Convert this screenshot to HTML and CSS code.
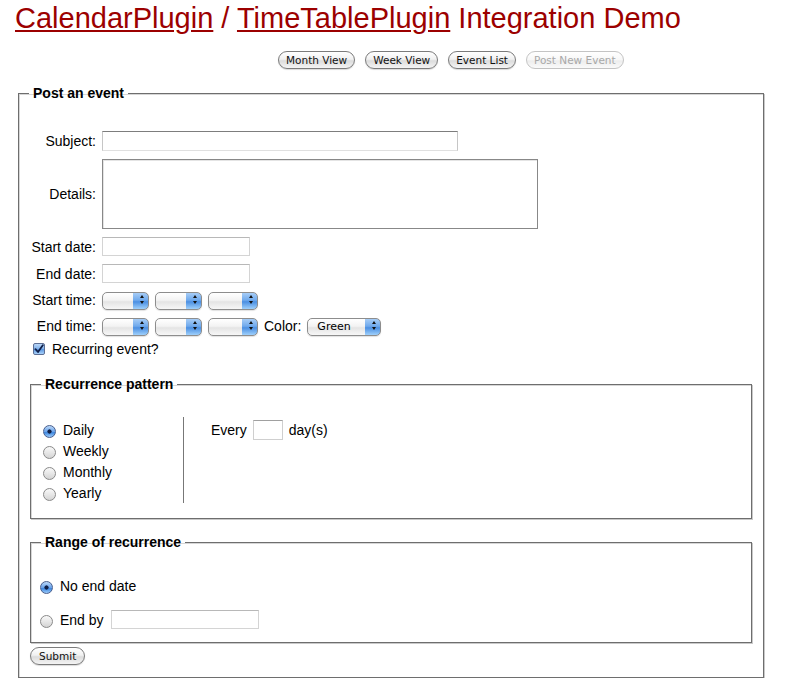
FILE: index.html
```html
<!DOCTYPE html>
<html>
<head>
<meta charset="utf-8">
<title>CalendarPlugin / TimeTablePlugin Integration Demo</title>
<link rel="stylesheet" href="styles.css">
</head>
<body>
<h1 class="title"><a href="#">CalendarPlugin</a> / <a href="#">TimeTablePlugin</a> Integration Demo</h1>
<div class="nav">
  <button class="btn">Month View</button>
  <button class="btn">Week View</button>
  <button class="btn">Event List</button>
  <button class="btn" disabled>Post New Event</button>
</div>
<form class="post">
<fieldset class="outer">
  <legend>Post an event</legend>
  <div class="grid">
    <label class="lbl">Subject:</label>
    <div class="fld"><input class="txt subject" type="text"></div>
    <label class="lbl">Details:</label>
    <div class="fld"><textarea class="details"></textarea></div>
    <label class="lbl">Start date:</label>
    <div class="fld"><input class="txt date" type="text"></div>
    <label class="lbl">End date:</label>
    <div class="fld"><input class="txt date" type="text"></div>
    <label class="lbl">Start time:</label>
    <div class="fld selrow">
      <span class="sel"><select class="s1"></select></span>
      <span class="sel"><select class="s1"></select></span>
      <span class="sel"><select class="s2"></select></span>
    </div>
    <label class="lbl">End time:</label>
    <div class="fld selrow">
      <span class="sel"><select class="s1"></select></span>
      <span class="sel"><select class="s1"></select></span>
      <span class="sel"><select class="s2"></select></span>
      <span class="color-lbl">Color:</span>
      <span class="sel"><select class="s3"><option>Green</option></select></span>
    </div>
  </div>
  <div class="recur">
    <span class="check"><svg width="10" height="10" viewBox="0 0 10 10"><path d="M1.5 5.2 L4 8 L8.8 1.2" fill="none" stroke="#10204a" stroke-width="1.8" stroke-linecap="round" stroke-linejoin="round"/></svg></span>
    <span>Recurring event?</span>
  </div>
  <fieldset class="inner pattern">
    <legend>Recurrence pattern</legend>
    <div class="cols">
      <div class="types">
        <div class="opt"><span class="radio on"></span>Daily</div>
        <div class="opt"><span class="radio"></span>Weekly</div>
        <div class="opt"><span class="radio"></span>Monthly</div>
        <div class="opt"><span class="radio"></span>Yearly</div>
      </div>
      <div class="every">
        <span>Every</span>
        <input class="txt num" type="text">
        <span>day(s)</span>
      </div>
    </div>
  </fieldset>
  <fieldset class="inner range">
    <legend>Range of recurrence</legend>
    <div class="ropt first"><span class="radio on"></span>No end date</div>
    <div class="ropt"><span class="radio"></span>End by <input class="txt endby" type="text"></div>
  </fieldset>
  <button class="btn submit" type="button">Submit</button>
</fieldset>
</form>
</body>
</html>
```
FILE: styles.css
```css
html, body {
  margin: 0;
  padding: 0;
  background: #fff;
}
body {
  font-family: "Liberation Sans", Arial, Helvetica, sans-serif;
  font-size: 14px;
  line-height: 16px;
  color: #000;
}
.title {
  margin: 2px 0 0 15px;
  font-size: 29px;
  line-height: 32px;
  font-weight: normal;
  color: #9c0000;
  white-space: nowrap;
}
.title a {
  color: #9c0000;
  text-decoration: underline;
}
.nav {
  display: flex;
  gap: 10px;
  margin: 17px 0 0 278px;
}
.btn {
  font-family: "DejaVu Sans", "Lucida Grande", sans-serif;
  font-size: 10.5px;
  line-height: 14px;
  height: 18px;
  padding: 0 7px;
  border: 1px solid #7b7b7b;
  border-radius: 9px;
  color: #111;
  background: linear-gradient(to bottom, #ffffff 0%, #f1f1f1 45%, #dcdcdc 55%, #f4f4f4 100%);
  box-shadow: 0 1px 1px rgba(0,0,0,0.15);
  cursor: default;
}
.btn:disabled {
  color: #a8a8a8;
  border-color: #c4c4c4;
  background: linear-gradient(to bottom, #ffffff 0%, #f7f7f7 50%, #ededed 55%, #fafafa 100%);
  box-shadow: none;
}
.post {
  margin: 16px 0 0 18px;
}
fieldset {
  margin: 0;
  min-width: 0;
}
legend {
  font-weight: bold;
  font-size: 14px;
  line-height: 16px;
  padding: 0 4px;
}
.outer {
  width: 746px;
  box-sizing: border-box;
  border: 1px solid #6e6e6e;
  box-shadow: 1px 1px 0 #c9c9c9, inset 1px 1px 0 #d6d6d6;
  padding: 30px 11px 12px 11px;
}
.outer > legend {
  margin-left: -1px;
}
.grid {
  display: grid;
  grid-template-columns: 66px auto;
  column-gap: 6px;
  row-gap: 8px;
  align-items: center;
}
.lbl {
  text-align: right;
  white-space: nowrap;
}
.fld {
  display: flex;
  align-items: center;
}
.txt {
  box-sizing: border-box;
  height: 19px;
  padding: 0 3px;
  border: 1px solid #c6c6c6;
  border-top-color: #9a9a9a;
  border-bottom-color: #e0e0e0;
  background: #fff;
  font: 13px "Liberation Sans", Arial, sans-serif;
  outline: none;
}
.subject {
  width: 356px;
  height: 20px;
  border-top-color: #7d7d7d;
}
.details {
  box-sizing: border-box;
  width: 436px;
  height: 70px;
  border: 1px solid #888;
  box-shadow: inset 1px 1px 0 #e4e4e4;
  resize: none;
  font: 13px "Liberation Sans", Arial, sans-serif;
  outline: none;
}
.date {
  width: 148px;
  border-color: #d4d4d4;
  border-top-color: #b8b8b8;
}
.selrow {
  gap: 6px;
}
.sel {
  position: relative;
  display: inline-block;
  height: 18px;
}
.sel select {
  -webkit-appearance: none;
  appearance: none;
  box-sizing: border-box;
  height: 18px;
  margin: 0;
  padding: 0 18px 0 9px;
  border: 1px solid #8d8d8d;
  border-radius: 5px;
  font: 11px "DejaVu Sans", "Lucida Grande", sans-serif;
  color: #000;
  background:
    linear-gradient(to bottom, #a7cdf7 0%, #6fa9ec 45%, #4b8fe2 55%, #9fd0fb 100%) right top / 15px 100% no-repeat,
    linear-gradient(to bottom, #ffffff 0%, #f3f3f3 45%, #e4e4e4 55%, #f7f7f7 100%);
  box-shadow: 0 1px 1px rgba(0,0,0,0.12);
  outline: none;
}
.sel::before, .sel::after {
  content: "";
  position: absolute;
  right: 5px;
  width: 0;
  height: 0;
  border-left: 2.5px solid transparent;
  border-right: 2.5px solid transparent;
  pointer-events: none;
}
.sel::before {
  top: 4px;
  border-bottom: 3px solid #111;
}
.sel::after {
  top: 10px;
  border-top: 3px solid #111;
}
.s1 { width: 47px; }
.s2 { width: 50px; }
.s3 { width: 74px; }
.recur {
  display: flex;
  align-items: center;
  gap: 7px;
  margin: 6px 0 0 3px;
  height: 16px;
}
.check {
  box-sizing: border-box;
  width: 12px;
  height: 12px;
  border: 1px solid #5d6f95;
  border-radius: 2px;
  background: linear-gradient(to bottom, #b9d7f8 0%, #7fb0ea 50%, #5d97e0 55%, #a8d2fb 100%);
  display: flex;
  align-items: center;
  justify-content: center;
}
.check svg {
  display: block;
}
.inner {
  box-sizing: border-box;
  width: 722px;
  border: 1px solid #6e6e6e;
  box-shadow: 1px 1px 0 #c9c9c9, inset 1px 1px 0 #d6d6d6;
  padding: 0 10px 12px 10px;
}
.pattern {
  margin-top: 19px;
  padding-top: 25px;
  padding-bottom: 15px;
}
.cols {
  display: flex;
  align-items: flex-start;
}
.types {
  width: 140px;
  padding: 2px 0 0 2px;
  border-right: 1px solid #777;
}
.opt {
  display: flex;
  align-items: center;
  height: 21px;
  gap: 7px;
}
.radio {
  box-sizing: border-box;
  width: 13px;
  height: 13px;
  border-radius: 50%;
  border: 1px solid #8a8a8a;
  background: linear-gradient(to bottom, #f9f9f9 0%, #e7e7e7 50%, #d4d4d4 100%);
  flex: none;
  margin-top: 3px;
}
.radio.on {
  border-color: #4a5f8d;
  background:
    radial-gradient(circle at 50% 50%, #0f1e45 0, #0f1e45 1.8px, transparent 2.4px),
    linear-gradient(to bottom, #bcd9f9 0%, #6aa3ea 50%, #3e87df 60%, #9ccbfa 100%);
}
.every {
  display: flex;
  align-items: center;
  gap: 6px;
  padding-left: 27px;
  margin-top: 2px;
  height: 21px;
}
.num {
  width: 30px;
  height: 20px;
  border-color: #cfcfcf;
  border-top-color: #a0a0a0;
}
.range {
  margin-top: 15px;
  padding-top: 26px;
  padding-left: 9px;
  padding-bottom: 13px;
}
.range > legend {
  margin-left: 1px;
}
.ropt {
  display: flex;
  align-items: center;
  gap: 7px;
  height: 19px;
}
.ropt.first {
  margin-bottom: 15px;
}
.endby {
  width: 148px;
  border-color: #d4d4d4;
  border-top-color: #b8b8b8;
}
.submit {
  display: block;
  margin-top: 4px;
  padding: 0 8px;
  height: 18px;
}
```
